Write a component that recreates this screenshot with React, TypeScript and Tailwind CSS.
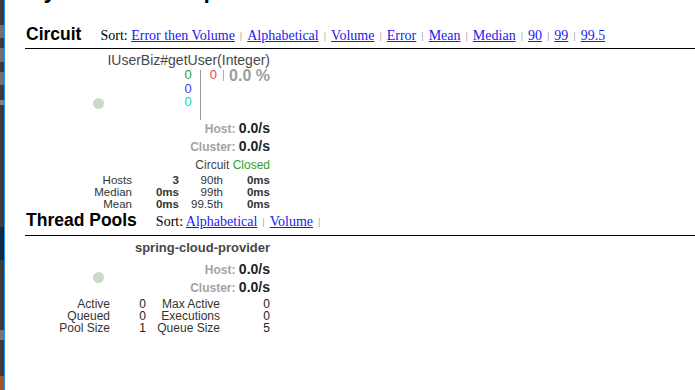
import React from 'react'

const sans = { fontFamily: '"Liberation Sans", Arial, sans-serif' }

function Sep() {
  return <span className="mx-[5px] align-[1px] text-[9px] text-[#a8a8a8]" style={sans}>|</span>
}

function SortBar({ links }: { links: string[] }) {
  return (
    <div className="ml-[19px] text-[14px] text-black" style={{ fontFamily: '"Liberation Serif", "Times New Roman", serif' }}>
      Sort:{' '}
      {links.map((l, i) => (
        <React.Fragment key={l}>
          <a href="#" className="text-[#1a1aee] underline">{l}</a>
          {(i < links.length - 1 || links.length === 2) && <Sep />}
        </React.Fragment>
      ))}
    </div>
  )
}

function Section({ title, links, pad }: { title: string; links: string[]; pad: string }) {
  return (
    <div className={`flex items-baseline border-b border-black ${pad} leading-[20px]`}>
      <h2 className="pl-[1px] text-[17.5px] font-bold text-black" style={sans}>{title}</h2>
      <SortBar links={links} />
    </div>
  )
}

function Bubble({ top }: { top: string }) {
  return <div className={`absolute left-[68px] ${top} h-[11px] w-[11px] rounded-full bg-[#cadbca]`} />
}

function Rate({ label }: { label: string }) {
  return (
    <div className="text-right text-[12px] leading-[17px]">
      <span className="font-bold text-[#a3a3a3]">{label}: </span>
      <span className="text-[14px] font-bold text-[#222]">0.0/s</span>
    </div>
  )
}

function CircuitMonitor() {
  const rows = [
    ['Hosts', '3', '90th', '0ms'],
    ['Median', '0ms', '99th', '0ms'],
    ['Mean', '0ms', '99.5th', '0ms'],
  ]
  return (
    <div className="relative w-[245px]" style={sans}>
      <Bubble top="top-[46px]" />
      <div className="mt-[3px] text-right text-[14px] leading-[16px] text-[#474747]">IUserBiz#getUser(Integer)</div>
      <div className="flex items-start justify-end">
        <div className="text-right text-[13px] leading-[13.5px]">
          <div className="text-[#2e9c2e]">0</div>
          <div className="text-[#3b3bf5]">0</div>
          <div className="text-[#22d0a2]">0</div>
        </div>
        <div className="ml-[8px] mt-[2px] h-[50px] w-px bg-[#9a9a9a]" />
        <div className="ml-[9px] text-[13px] leading-[13.5px] text-[#f04545]">0</div>
        <div className="ml-[6px] mt-[2px] h-[11px] w-px bg-[#b0b0b0]" />
        <div className="ml-[5px] text-[16px] font-bold leading-[15px] text-[#9d9d9d]">0.0 %</div>
      </div>
      <Rate label="Host" />
      <Rate label="Cluster" />
      <div className="mt-[2px] text-right text-[12px] leading-[15px] text-[#444]">
        Circuit <span className="text-[#2ea02e]">Closed</span>
      </div>
      <div className="mt-[1px] grid grid-cols-[107px_47px_44px_47px] text-right text-[11.5px] leading-[12px] text-[#333]">
        {rows.map(r => (
          <React.Fragment key={r[0]}>
            <div>{r[0]}</div>
            <div className="font-bold">{r[1]}</div>
            <div>{r[2]}</div>
            <div className="font-bold">{r[3]}</div>
          </React.Fragment>
        ))}
      </div>
    </div>
  )
}

function PoolMonitor() {
  const rows = [
    ['Active', '0', 'Max Active', '0'],
    ['Queued', '0', 'Executions', '0'],
    ['Pool Size', '1', 'Queue Size', '5'],
  ]
  return (
    <div className="relative w-[245px]" style={sans}>
      <Bubble top="top-[32px]" />
      <div className="mt-[4px] text-right text-[13px] font-bold leading-[16px] text-[#474747]">spring-cloud-provider</div>
      <div className="mt-[5px]">
        <Rate label="Host" />
        <Rate label="Cluster" />
      </div>
      <div className="mt-[1px] grid grid-cols-[85px_36px_74px_50px] text-right text-[12px] leading-[12px] text-[#333]">
        {rows.map(r => (
          <React.Fragment key={r[0]}>
            <div>{r[0]}</div>
            <div className="text-[#222]">{r[1]}</div>
            <div>{r[2]}</div>
            <div className="text-[#222]">{r[3]}</div>
          </React.Fragment>
        ))}
      </div>
    </div>
  )
}

export default function App() {
  return (
    <div className="flex h-[390px] w-[695px] overflow-hidden bg-white">
      <div className="flex w-[4px] flex-col bg-[#3b3b3b]">
        <div className="mt-[25px] h-[13px] bg-[#707070]" />
        <div className="mt-[10px] h-[14px] bg-[#707070]" />
        <div className="mt-[10px] h-[13px] bg-[#707070]" />
        <div className="mt-[15px] h-[5px] bg-[#808080]" />
        <div className="mt-[122px] h-[33px] bg-[#0f2a44]" />
        <div className="mt-[70px] h-[10px] bg-[#777]" />
        <div className="mt-auto h-[14px] bg-[#a0522d]" />
      </div>
      <div className="w-px bg-[#2c8ee8]" />
      <div className="flex-1 pl-[20px]">
        <div className="h-[4px] overflow-hidden">
          <div className="-mt-[22px] pl-[2px] text-[23px] font-bold leading-[24px] text-black" style={sans}>
            Hystrix Stream: provider
          </div>
        </div>
        <div className="mt-[20px]">
          <Section title="Circuit" pad="pb-[2px]" links={['Error then Volume', 'Alphabetical', 'Volume', 'Error', 'Mean', 'Median', '90', '99', '99.5']} />
        </div>
        <CircuitMonitor />
        <Section title="Thread Pools" pad="pb-[3px]" links={['Alphabetical', 'Volume']} />
        <PoolMonitor />
      </div>
    </div>
  )
}
